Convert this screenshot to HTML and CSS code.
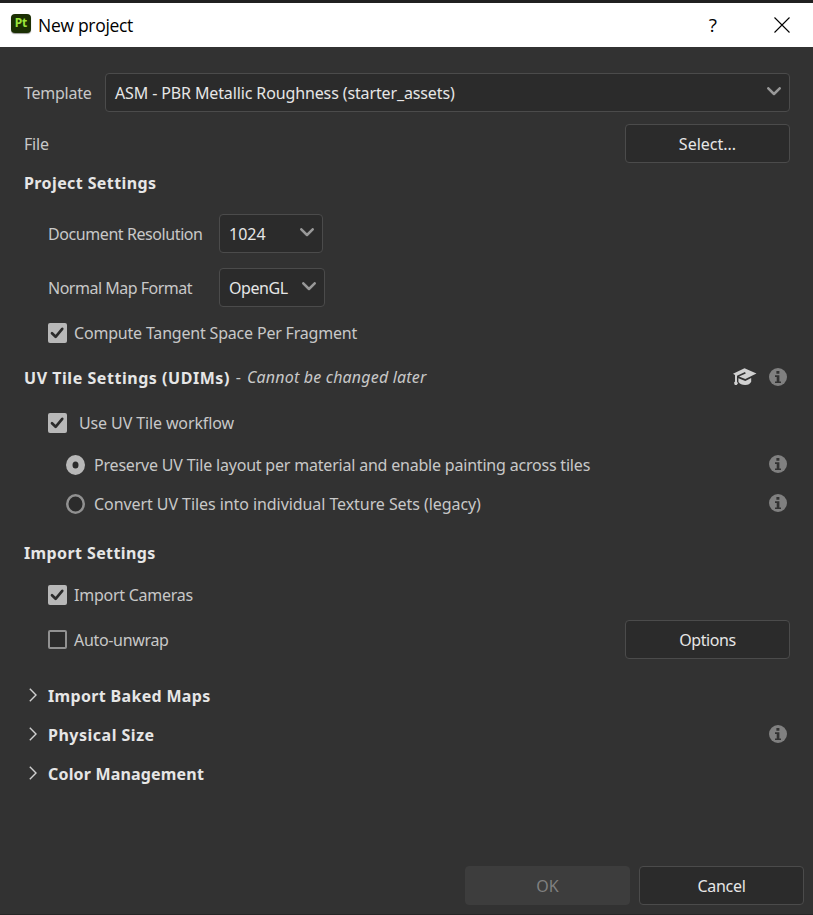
FILE: index.html
```html
<!DOCTYPE html>
<html lang="en">
<head>
<meta charset="utf-8">
<title>New project</title>
<link rel="stylesheet" href="styles.css">
</head>
<body>
<svg class="defs" width="0" height="0">
  <symbol id="chevron" viewBox="0 0 14 9"><path d="M1.3 1.3 7 7 12.7 1.3" fill="none" stroke="#999" stroke-width="2.5" stroke-linecap="round" stroke-linejoin="round"/></symbol>
  <symbol id="arrow" viewBox="0 0 8 14"><path d="M.8 .8 7 7 .8 13.2" fill="none" stroke="#d0d0d0" stroke-width="1.4"/></symbol>
  <symbol id="info" viewBox="0 0 18 18"><circle cx="9" cy="9" r="9" fill="#808080"/><path d="M7.4 3h3v2.8h-3zM6 7.3h4.4v6.1H12V15H6v-1.6h1.7V8.9H6z" fill="#323232"/></symbol>
  <symbol id="check" viewBox="0 0 20 20"><path d="M4.2 10.2 8 14 15 5.6" fill="none" stroke="#2b2b2b" stroke-width="2.8" stroke-linecap="round" stroke-linejoin="round"/></symbol>
</svg>
<div class="dialog">
  <header class="titlebar">
    <span class="logo">Pt</span>
    <span class="title">New project</span>
    <span class="help">?</span>
    <svg class="close" width="16" height="16" viewBox="0 0 16 16"><path d="M.5 .5 15.5 15.5M15.5 .5 .5 15.5" stroke="#000" stroke-width="1.1"/></svg>
  </header>
  <main>
    <div class="row template"><label class="w-template">Template</label><div class="select grow"><span class="w-asm">ASM - PBR Metallic Roughness (starter_assets)</span><svg class="chev"><use href="#chevron"/></svg></div></div>
    <div class="row file"><label class="w-file">File</label><button class="btn end"><span class="w-select">Select...</span></button></div>
    <div class="row project"><h2 class="w-project">Project Settings</h2></div>
    <div class="row resolution"><label class="field w-doc">Document Resolution</label><div class="select res"><span class="w-1024">1024</span><svg class="chev"><use href="#chevron"/></svg></div></div>
    <div class="row normal"><label class="field w-normal">Normal Map Format</label><div class="select fmt"><span class="w-gl">OpenGL</span><svg class="chev"><use href="#chevron"/></svg></div></div>
    <div class="row compute"><svg class="box checked"><use href="#check"/></svg><label class="w-compute">Compute Tangent Space Per Fragment</label></div>
    <div class="row uv"><h2 class="w-uv">UV Tile Settings (UDIMs)</h2><span class="dash">-</span><em class="w-em">Cannot be changed later</em>
      <svg class="cap" width="24" height="18" viewBox="0 0 24 18"><path d="M0 5.7 11.5 .2 23.5 5.4 12.3 11 6 8.5l6.8-3.1-.8-1.3-8 3.6v6.1l1 1.4-1.3 1.9H1.8L1 14.8l1-1.2V7z" fill="#d0d0d0"/><path d="M5.4 10.3 12.3 13l5.9-3.1v3.8c-1 2-3 3.3-6 3.3-3.2 0-5.5-1-6.8-3z" fill="#d0d0d0"/></svg>
      <svg class="info"><use href="#info"/></svg></div>
    <div class="row use"><svg class="box checked"><use href="#check"/></svg><label class="w-use">Use UV Tile workflow</label></div>
    <div class="row preserve"><span class="radio on"></span><label class="w-preserve">Preserve UV Tile layout per material and enable painting across tiles</label><svg class="info end"><use href="#info"/></svg></div>
    <div class="row convert"><span class="radio"></span><label class="w-convert">Convert UV Tiles into individual Texture Sets (legacy)</label><svg class="info end"><use href="#info"/></svg></div>
    <div class="row import"><h2 class="w-import">Import Settings</h2></div>
    <div class="row cameras"><svg class="box checked"><use href="#check"/></svg><label class="w-cameras">Import Cameras</label></div>
    <div class="row unwrap"><span class="box empty"></span><label class="w-unwrap">Auto-unwrap</label><button class="btn end"><span class="w-options">Options</span></button></div>
    <div class="row fold baked"><svg class="arrow"><use href="#arrow"/></svg><h2 class="w-baked">Import Baked Maps</h2></div>
    <div class="row fold"><svg class="arrow"><use href="#arrow"/></svg><h2 class="w-physical">Physical Size</h2><svg class="info end"><use href="#info"/></svg></div>
    <div class="row fold"><svg class="arrow"><use href="#arrow"/></svg><h2 class="w-color">Color Management</h2></div>
  </main>
  <footer><button class="btn disabled"><span class="w-ok">OK</span></button><button class="btn"><span class="w-cancel">Cancel</span></button></footer>
</div>
</body>
</html>
```
FILE: styles.css
```css
* { box-sizing: border-box; }
body { margin: 0; background: #323232; color: #c8c8c8; font: 16px/22px "Noto Sans", sans-serif; }
.defs { display: block; }
.dialog { height: 915px; overflow: hidden; border-top: 3px solid #202020; border-bottom: 1px solid #262626; white-space: nowrap; }
.titlebar { height: 44px; background: #fff; color: #000; display: flex; align-items: center; padding: 0 23px 0 11px; }
.logo { width: 20px; height: 19px; margin: 0 7px 4px 0; border-radius: 4px; background: #1b2f03; color: #9be53b; font: bold 12px/18px "Noto Sans", sans-serif; text-align: center; box-shadow: 0 1px 1px #999; }
.title { font: 17.5px/24px "Open Sans", sans-serif; letter-spacing: -.3px; }
.help { margin-left: auto; margin-right: 57px; font: 19px/24px "Open Sans", sans-serif; }
main { padding: 26px 23px 0 24px; }
.row { display: flex; align-items: center; height: 40px; }
h2 { margin: 0; font-size: 16px; font-weight: 700; color: #e6e6e6; }
svg { flex: none; }
.template { height: 38px; }
.template label { width: 81px; }
.grow { flex: 1; }
.end { margin-left: auto; }
.select { height: 39px; display: flex; align-items: center; justify-content: space-between; padding: 1px 8px 0 9px; border: 1px solid #4b4b4b; border-radius: 4px; background: #2b2b2b; color: #e6e6e6; }
.template label, .file label, .field { padding-top: 2px; }
.chev { width: 14px; height: 9px; margin-bottom: 2px; }
.btn { width: 165px; height: 39px; padding: 1px 0 0; border: 1px solid #4b4b4b; border-radius: 4px; background: #2b2b2b; color: #e6e6e6; font: inherit; }
.file { height: 38px; margin-top: 13px; }
.project { height: 42px; }
.resolution { height: 38px; margin-top: 10px; padding-left: 24px; }
.normal { height: 38px; margin-top: 16px; padding-left: 24px; }
.field { width: 171px; }
.res { width: 104px; }
.fmt { width: 106px; }
.compute { margin-top: 7px; padding-left: 24px; }
.box { flex: none; width: 19px; height: 20px; margin-right: 7px; border-radius: 2px; }
.checked { background: #b8b8b8; }
.empty { height: 19px; border: 2px solid #919191; background: #2b2b2b; }
.uv { margin-top: 4px; }
.uv h2 { padding-top: 2px; }
.dash { margin: 0 6px; }
.cap { margin-left: auto; margin-right: 12px; }
.info { width: 18px; height: 18px; margin-right: 3px; }
.info.end { margin-bottom: 2px; }
.use { margin-top: 6px; padding-left: 24px; }
.use .box { margin-right: 12px; }
.preserve { margin-top: 2px; padding-left: 42px; }
.convert { height: 38px; padding-left: 42px; }
.radio { width: 19px; height: 20px; margin-right: 9px; border-radius: 50%; background: #2b2b2b; box-shadow: inset 0 0 0 2.5px #919191; }
.on { box-shadow: inset 0 0 0 6.5px #b8b8b8; }
.import { margin-top: 10px; }
.cameras { margin-top: 2px; padding-left: 24px; }
.unwrap { height: 39px; margin-top: 5px; padding-left: 24px; }
.fold { height: 39px; padding-left: 5px; }
.baked { margin-top: 17px; }
.arrow { width: 8px; height: 14px; margin-right: 11px; margin-bottom: 2px; }
footer { display: flex; gap: 9px; justify-content: flex-end; padding: 73px 9px 0 0; }
.disabled { border-color: #3d3d3d; background: #3d3d3d; color: #808080; }

/* Tracking per label */
.w-template { letter-spacing: -.25px; }
.w-file { letter-spacing: -.2px; }
.w-asm { letter-spacing: -.125px; }
.w-doc { letter-spacing: -.42px; }
.w-normal { letter-spacing: -.5px; }
.w-gl { letter-spacing: -.45px; }
.w-compute { letter-spacing: -.19px; }
.w-project { letter-spacing: .4px; }
.w-uv { letter-spacing: .54px; }
.w-em { letter-spacing: .18px; }
.w-use { letter-spacing: -.12px; }
.w-preserve { letter-spacing: -.2px; }
.w-convert { letter-spacing: -.07px; }
.w-import { letter-spacing: .39px; }
.w-cameras { letter-spacing: -.25px; }
.w-unwrap { letter-spacing: -.33px; }
.w-options { letter-spacing: -.45px; }
.w-cancel { letter-spacing: -.3px; }
.w-baked { letter-spacing: .33px; }
.w-physical { letter-spacing: .5px; }
.w-color { letter-spacing: .18px; }
```
